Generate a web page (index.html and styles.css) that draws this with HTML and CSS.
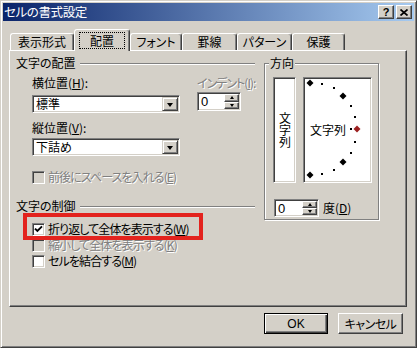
FILE: index.html
```html
<!DOCTYPE html>
<html lang="ja">
<head>
  <meta charset="UTF-8" />
  <title>セルの書式設定</title>
  <link rel="stylesheet" href="styles.css">
</head>
<body>
<div class="window">

  <!-- タイトルバー -->
  <div class="titlebar">
    <span class="title">セルの書式設定</span>
    <span class="capbtn help">?</span>
    <span class="capbtn close">
      <svg width="8" height="7" viewBox="0 0 8 7"><path d="M0.5 0.5 L7.5 6.5 M7.5 0.5 L0.5 6.5" stroke="#000" stroke-width="1.7" fill="none"/></svg>
    </span>
  </div>

  <!-- タブ -->
  <div class="tabs">
    <div class="tab t-num">表示形式</div>
    <div class="tab t-align active"><span class="focus">配置</span></div>
    <div class="tab t-font">フォント</div>
    <div class="tab t-border">罫線</div>
    <div class="tab t-pattern">パターン</div>
    <div class="tab t-protect">保護</div>
  </div>

  <div class="panel">
    <div class="left">
      <div class="sep">文字の配置</div>

      <div class="posrow">
        <div class="col1">
          <div class="label">横位置(<u>H</u>):</div>
          <div class="combo">
            <span class="value">標準</span>
            <span class="dropbtn"><i class="tri"></i></span>
          </div>
          <div class="label second">縦位置(<u>V</u>):</div>
          <div class="combo near">
            <span class="value">下詰め</span>
            <span class="dropbtn"><i class="tri"></i></span>
          </div>
        </div>
        <div class="col2">
          <div class="label indent-label disabled">インデント(<u>I</u>):</div>
          <div class="spin indent">
            <span class="value">0</span>
            <span class="spinbtns"><span class="sb"><i class="up"></i></span><span class="sb"><i class="down"></i></span></span>
          </div>
        </div>
      </div>

      <div class="check first disabled"><span class="cb off"></span>前後にスペースを入れる(<u>E</u>)</div>

      <div class="sep ctl">文字の制御</div>

      <div class="check wrap">
        <span class="cb">
          <svg width="9" height="9" viewBox="0 0 9 9"><path d="M1 3.6 L3.4 6 L8 1.4" stroke="#000" stroke-width="1.9" fill="none"/></svg>
        </span>折り返して全体を表示する(<u>W</u>)
        <span class="mark"></span>
      </div>
      <div class="check disabled"><span class="cb off"></span>縮小して全体を表示する(<u>K</u>)</div>
      <div class="check"><span class="cb"></span>セルを結合する(<u>M</u>)</div>
    </div>

    <!-- 方向 -->
    <div class="group">
      <span class="legend">方向</span>
      <div class="orient">
        <div class="vbox">文字列</div>
        <div class="hbox">
          <span class="htext">文字列</span>
          <svg class="dial" width="65" height="102" viewBox="0 0 65 102">
            <g fill="#000">
              <path d="M5 0.5 L8.5 4 L5 7.5 L1.5 4Z"/>
              <path d="M38 13.5 L41.5 17 L38 20.5 L34.5 17Z"/>
              <path d="M38 79.5 L41.5 83 L38 86.5 L34.5 83Z"/>
              <path d="M5 92.5 L8.5 96 L5 99.5 L1.5 96Z"/>
              <rect x="16" y="4" width="2" height="2"/>
              <rect x="28" y="8" width="2" height="2"/>
              <rect x="45" y="26" width="2" height="2"/>
              <rect x="49" y="37" width="2" height="2"/>
              <rect x="49" y="62" width="2" height="2"/>
              <rect x="45" y="73" width="2" height="2"/>
              <rect x="28" y="90" width="2" height="2"/>
              <rect x="16" y="94" width="2" height="2"/>
              <rect x="45" y="49" width="2" height="2"/>
            </g>
            <path d="M52 46.5 L55.5 50 L52 53.5 L48.5 50Z" fill="#9c2020"/>
          </svg>
        </div>
      </div>
      <div class="degree">
        <div class="spin deg">
          <span class="value">0</span>
          <span class="spinbtns"><span class="sb"><i class="up"></i></span><span class="sb"><i class="down"></i></span></span>
        </div>
        <span class="deglabel">度(<u>D</u>)</span>
      </div>
    </div>
  </div>

  <div class="buttons">
    <div class="btn ok">OK</div>
    <div class="btn cancel">キャンセル</div>
  </div>
</div>
</body>
</html>
```

FILE: styles.css
```css
/* Win2000 クラシック風ダイアログ */
body {
  margin: 0;
  background: #d4d0c8;
  font-family: "Noto Sans CJK JP", "Noto Sans", sans-serif;
  font-size: 12px;
  font-feature-settings: "palt";
  color: #000;
}

u { text-decoration: underline; text-underline-offset: 1px; }

.window {
  width: 417px;
  height: 348px;
  box-sizing: border-box;
  background: #d4d0c8;
  border: 1px solid;
  border-color: #d4d0c8 #404040 #404040 #d4d0c8;
  box-shadow: inset 1px 1px #fff, inset -1px -1px #808080;
  padding: 2px;
  display: flex;
  flex-direction: column;
}

/* タイトルバー */
.titlebar {
  height: 18px;
  display: flex;
  align-items: center;
  background: linear-gradient(to right, #0a246a, #a6caf0);
  color: #fff;
  padding-left: 1px;
}
.title {
  font-size: 12.5px;
  line-height: 18px;
  letter-spacing: -0.4px;
}
.capbtn {
  box-sizing: border-box;
  width: 16px;
  height: 14px;
  background: #d4d0c8;
  border: 1px solid;
  border-color: #fff #404040 #404040 #fff;
  box-shadow: inset -1px -1px #808080;
  display: flex;
  align-items: center;
  justify-content: center;
  color: #000;
  font-family: "Liberation Sans", sans-serif;
  font-weight: bold;
  font-size: 11px;
  line-height: 12px;
}
.help { margin-left: auto; }
.close { margin-left: 2px; margin-right: 2px; }

/* タブ */
.tabs {
  display: flex;
  align-items: flex-end;
  height: 21px;
  margin: 8px 0 0 7px;
}
.tab {
  box-sizing: border-box;
  height: 17px;
  border: 1px solid;
  border-bottom: none;
  border-color: #fff #404040 transparent #fff;
  border-radius: 3px 3px 0 0;
  box-shadow: inset -1px 0 #808080;
  text-align: center;
  line-height: 16px;
}
.t-num { width: 64px; }
.t-align { width: 56px; }
.t-font { width: 52px; }
.t-border { width: 55px; }
.t-pattern { width: 55px; }
.t-protect { width: 53px; }
.tab.active {
  height: 22px;
  margin-bottom: -1px;
  position: relative;
  z-index: 1;
  background: #d4d0c8;
  padding-top: 2px;
}
.focus {
  display: inline-block;
  border: 1px dotted #000;
  padding: 0 10px;
  line-height: 15px;
}

/* タブパネル */
.panel {
  box-sizing: border-box;
  width: 398px;
  height: 257px;
  margin-left: 6px;
  border: 1px solid;
  border-color: #fff #404040 #404040 #fff;
  box-shadow: inset -1px -1px #808080;
  display: flex;
  padding: 5px 0 0 6px;
}
.left { width: 239px; flex: none; }

.sep {
  display: flex;
  align-items: center;
  height: 14px;
  line-height: 14px;
}
.sep::after {
  content: "";
  flex: 1;
  border-top: 1px solid #808080;
  border-bottom: 1px solid #fff;
  margin-left: 4px;
  margin-top: 2px;
}
.sep.ctl { margin-top: 15px; }

.posrow {
  display: flex;
  padding-left: 16px;
  margin-top: 6px;
}
.col1 { width: 148px; flex: none; }
.col2 { margin-left: 17px; flex: none; }
.label { height: 14px; line-height: 14px; white-space: nowrap; }
.label.second { margin-top: 8px; }
.indent-label { letter-spacing: -1px; }

.disabled { color: #808080; text-shadow: 1px 1px 0 #fff; }

/* コンボボックス */
.combo {
  box-sizing: border-box;
  margin-top: 5px;
  height: 18px;
  background: #fff;
  border: 1px solid;
  border-color: #808080 #fff #fff #808080;
  box-shadow: inset 1px 1px #404040, inset -1px -1px #d4d0c8;
  display: flex;
  align-items: center;
  padding: 1px;
}
.combo.near { margin-top: 3px; }
.combo .value { flex: 1; padding-left: 2px; line-height: 14px; }
.dropbtn {
  box-sizing: border-box;
  width: 16px;
  height: 14px;
  background: #d4d0c8;
  border: 1px solid;
  border-color: #d4d0c8 #404040 #404040 #d4d0c8;
  box-shadow: inset 1px 1px #fff, inset -1px -1px #808080;
  display: flex;
  align-items: center;
  justify-content: center;
}
.tri {
  width: 0;
  height: 0;
  border-left: 3.5px solid transparent;
  border-right: 3.5px solid transparent;
  border-top: 4px solid #000;
  margin-top: 1px;
}

/* スピンボックス */
.spin {
  box-sizing: border-box;
  background: #fff;
  border: 1px solid;
  border-color: #808080 #fff #fff #808080;
  box-shadow: inset 1px 1px #404040, inset -1px -1px #d4d0c8;
  display: flex;
  align-items: stretch;
  padding: 1px;
  text-shadow: none;
}
.spin.indent { width: 44px; height: 19px; margin-top: 2px; }
.spin.deg { width: 45px; height: 18px; }
.spin .value { flex: 1; padding-left: 2px; line-height: 15px; font-family: "Liberation Sans", sans-serif; font-size: 13px; color: #000; }
.spinbtns { width: 15px; display: flex; flex-direction: column; }
.sb {
  flex: 1;
  box-sizing: border-box;
  background: #d4d0c8;
  border: 1px solid;
  border-color: #fff #404040 #404040 #fff;
  box-shadow: inset -1px -1px #808080;
  display: flex;
  align-items: center;
  justify-content: center;
}
.up, .down {
  width: 0;
  height: 0;
  border-left: 2.5px solid transparent;
  border-right: 2.5px solid transparent;
}
.up { border-bottom: 3px solid #000; }
.down { border-top: 3px solid #000; }

/* チェックボックス */
.check {
  display: flex;
  align-items: center;
  height: 14px;
  line-height: 14px;
  padding-left: 16px;
  margin-top: 2px;
  white-space: nowrap;
  letter-spacing: -0.9px;
  position: relative;
}
.check.first { margin-top: 14px; }
.check.wrap { margin-top: 9px; }
.cb {
  box-sizing: border-box;
  flex: none;
  width: 13px;
  height: 13px;
  margin-right: 3px;
  background: #fff;
  border: 1px solid;
  border-color: #808080 #fff #fff #808080;
  box-shadow: inset 1px 1px #404040, inset -1px -1px #d4d0c8;
  display: flex;
  align-items: center;
  justify-content: center;
  text-shadow: none;
}
.cb.off { background: #d4d0c8; }

/* 赤い強調枠 */
.mark {
  position: absolute;
  left: 7px;
  top: -9px;
  width: 180px;
  height: 27px;
  box-sizing: border-box;
  border: 4px solid #e3231e;
  z-index: 2;
}

/* 方向グループ */
.group {
  box-sizing: border-box;
  flex: none;
  width: 115px;
  height: 157px;
  margin: 7px 0 0 9px;
  border: 1px solid #808080;
  box-shadow: inset 1px 1px #fff, 1px 1px #fff;
  position: relative;
  padding: 13px 0 0 8px;
}
.legend {
  position: absolute;
  top: -8px;
  left: 4px;
  padding: 0 1px;
  background: #d4d0c8;
  line-height: 14px;
}
.orient { display: flex; gap: 7px; }
.vbox, .hbox {
  box-sizing: border-box;
  height: 106px;
  background: #fff;
  border: 1px solid;
  border-color: #808080 #fff #fff #808080;
  box-shadow: inset 1px 1px #404040, inset -1px -1px #d4d0c8;
}
.vbox {
  width: 23px;
  writing-mode: vertical-rl;
  display: flex;
  align-items: center;
  justify-content: center;
  line-height: 19px;
  padding-left: 1px;
}
.hbox {
  width: 69px;
  position: relative;
  display: flex;
  align-items: center;
  padding-left: 6px;
}
.htext { line-height: 14px; }
.dial {
  position: absolute;
  left: 1px;
  top: 1px;
}
.degree {
  display: flex;
  align-items: center;
  margin-top: 16px;
  padding-left: 1px;
}
.deglabel { margin-left: 4px; line-height: 14px; }

/* ボタン */
.buttons {
  display: flex;
  justify-content: flex-end;
  gap: 10px;
  margin-top: 6px;
  padding-right: 11px;
}
.btn {
  box-sizing: border-box;
  height: 21px;
  display: flex;
  align-items: center;
  justify-content: center;
  border: 1px solid;
  border-color: #fff #404040 #404040 #fff;
  box-shadow: inset -1px -1px #808080;
}
.btn.ok {
  width: 64px;
  border-color: #000;
  box-shadow: inset 1px 1px #fff, inset -1px -1px #404040, inset -2px -2px #808080;
  font-family: "Liberation Sans", sans-serif;
  font-size: 12px;
}
.btn.cancel { width: 65px; letter-spacing: -0.5px; }
```
